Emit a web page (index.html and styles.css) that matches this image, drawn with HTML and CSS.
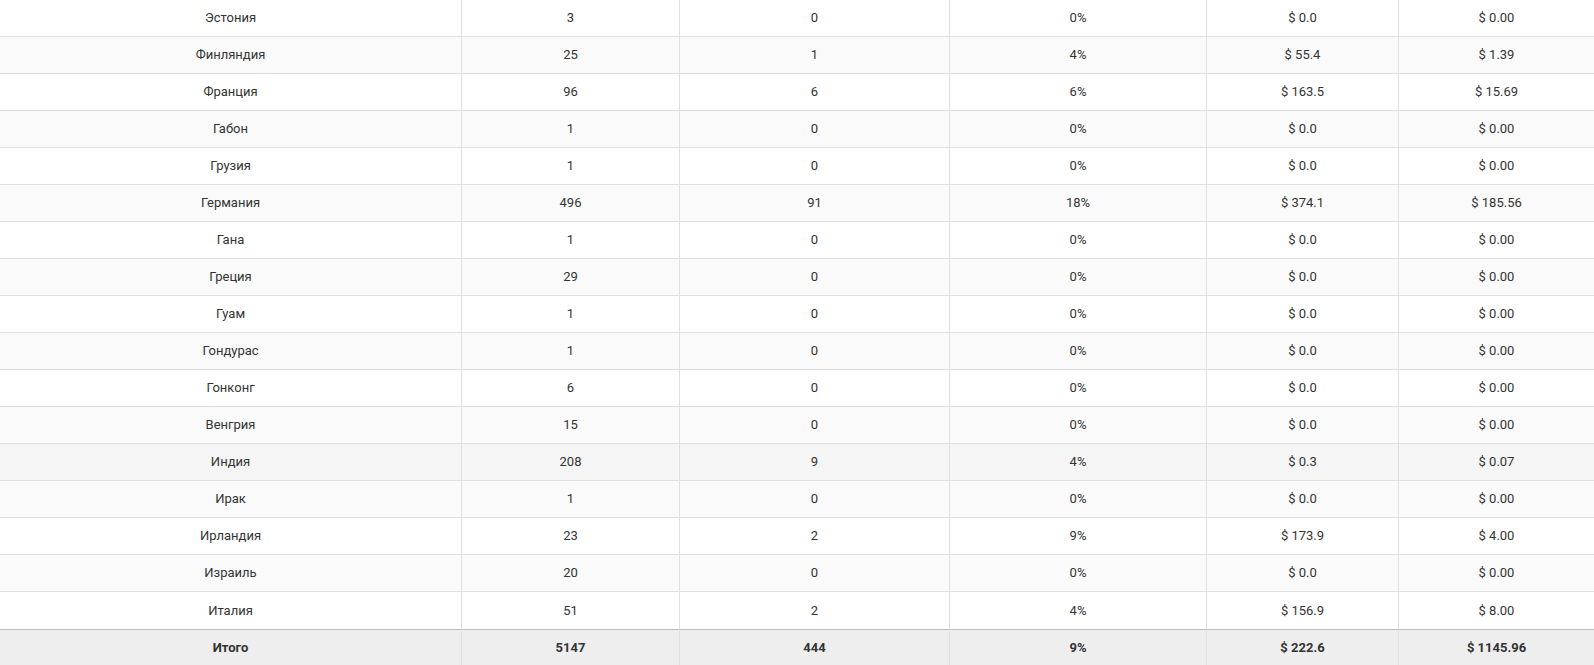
FILE: index.html
```html
<!DOCTYPE html>
<html lang="ru">
<head>
<meta charset="utf-8">
<link rel="stylesheet" href="styles.css">
</head>
<body>
<table class="stats">
  <colgroup>
    <col class="c1"><col class="c2"><col class="c3"><col class="c4"><col class="c5"><col class="c6">
  </colgroup>
  <tbody>
    <tr><td>Эстония</td><td>3</td><td>0</td><td>0%</td><td>$ 0.0</td><td>$ 0.00</td></tr>
    <tr><td>Финляндия</td><td>25</td><td>1</td><td>4%</td><td>$ 55.4</td><td>$ 1.39</td></tr>
    <tr><td>Франция</td><td>96</td><td>6</td><td>6%</td><td>$ 163.5</td><td>$ 15.69</td></tr>
    <tr><td>Габон</td><td>1</td><td>0</td><td>0%</td><td>$ 0.0</td><td>$ 0.00</td></tr>
    <tr><td>Грузия</td><td>1</td><td>0</td><td>0%</td><td>$ 0.0</td><td>$ 0.00</td></tr>
    <tr><td>Германия</td><td>496</td><td>91</td><td>18%</td><td>$ 374.1</td><td>$ 185.56</td></tr>
    <tr><td>Гана</td><td>1</td><td>0</td><td>0%</td><td>$ 0.0</td><td>$ 0.00</td></tr>
    <tr><td>Греция</td><td>29</td><td>0</td><td>0%</td><td>$ 0.0</td><td>$ 0.00</td></tr>
    <tr><td>Гуам</td><td>1</td><td>0</td><td>0%</td><td>$ 0.0</td><td>$ 0.00</td></tr>
    <tr><td>Гондурас</td><td>1</td><td>0</td><td>0%</td><td>$ 0.0</td><td>$ 0.00</td></tr>
    <tr><td>Гонконг</td><td>6</td><td>0</td><td>0%</td><td>$ 0.0</td><td>$ 0.00</td></tr>
    <tr><td>Венгрия</td><td>15</td><td>0</td><td>0%</td><td>$ 0.0</td><td>$ 0.00</td></tr>
    <tr class="hover"><td>Индия</td><td>208</td><td>9</td><td>4%</td><td>$ 0.3</td><td>$ 0.07</td></tr>
    <tr><td>Ирак</td><td>1</td><td>0</td><td>0%</td><td>$ 0.0</td><td>$ 0.00</td></tr>
    <tr><td>Ирландия</td><td>23</td><td>2</td><td>9%</td><td>$ 173.9</td><td>$ 4.00</td></tr>
    <tr><td>Израиль</td><td>20</td><td>0</td><td>0%</td><td>$ 0.0</td><td>$ 0.00</td></tr>
    <tr><td>Италия</td><td>51</td><td>2</td><td>4%</td><td>$ 156.9</td><td>$ 8.00</td></tr>
  </tbody>
  <tfoot>
    <tr><td>Итого</td><td>5147</td><td>444</td><td>9%</td><td>$ 222.6</td><td>$ 1145.96</td></tr>
  </tfoot>
</table>
</body>
</html>
```
FILE: styles.css
```css
html, body {
  margin: 0;
  padding: 0;
  background: #ffffff;
}
body {
  font-family: Roboto, "Liberation Sans", sans-serif;
  font-size: 13px;
  color: #333333;
}
.stats {
  width: 100%;
  table-layout: fixed;
  border-collapse: separate;
  border-spacing: 0;
}
.c1 { width: 462px; }
.c2 { width: 218px; }
.c3 { width: 270px; }
.c4 { width: 257px; }
.c5 { width: 192px; }
.c6 { width: auto; }
.stats td {
  box-sizing: border-box;
  height: 37px;
  padding: 0 8px;
  text-align: center;
  vertical-align: middle;
  border-right: 1px solid #e0e0e0;
  border-bottom: 1px solid #e0e0e0;
  line-height: 16px;
}
.stats td:last-child {
  border-right: none;
}
.stats tbody tr:nth-child(even) td {
  background: #fafafa;
}
.stats tbody tr.hover td {
  background: #f5f5f5;
}
.stats tfoot td {
  background: #eeeeee;
  font-weight: 700;
  border-top: 1px solid #bdbdbd;
  border-bottom: none;
  height: 37px;
}
.stats tbody tr:last-child td {
  border-bottom: none;
}
```
